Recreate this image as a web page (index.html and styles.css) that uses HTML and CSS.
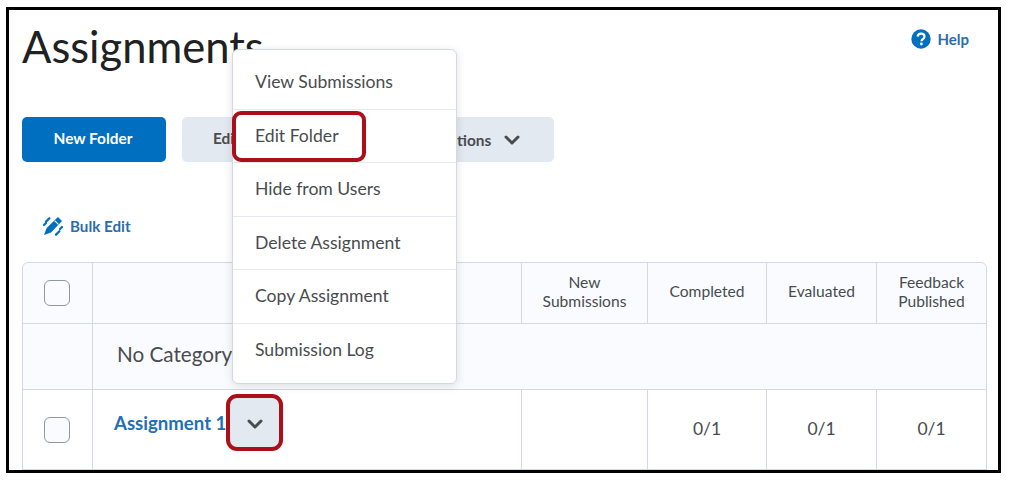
FILE: index.html
```html
<!DOCTYPE html>
<html lang="en">
<head>
    <meta charset="UTF-8">
    <title>Assignments</title>
    <link rel="stylesheet" href="styles.css">
</head>
<body>
    <div class="frame">
        <div class="page-head">
            <h1>Assignments</h1>
            <a class="help-link">
                <svg class="help-icon" viewBox="0 0 20 20"><circle cx="10" cy="10" r="9.7" fill="#006fbf"/><path d="M6.6 7.6C6.8 5.6 8.2 4.6 10.1 4.6c2 0 3.4 1.2 3.4 2.9 0 1.4-.8 2.1-1.8 2.8-.8.5-1.2.9-1.2 1.9" fill="none" stroke="#fff" stroke-width="2.2"/><circle cx="10.4" cy="15" r="1.4" fill="#fff"/></svg>
                Help
            </a>
        </div>
        <div class="actions">
            <button class="btn btn-primary">New Folder</button>
            <button class="btn btn-edit">Edit Categories</button>
            <button class="btn btn-more">More Actions
                <svg class="chevron" viewBox="0 0 16 10"><polyline points="2,2 8,8 14,2"/></svg>
            </button>
        </div>
        <a class="bulk-edit">
            <svg class="bulk-icon" viewBox="0 0 20 20"><path d="M15 1l4 4L8 16.4 1 19l2.6-7z" fill="#006fbf"/><path d="M3 5.6l3.4-3.4M1 9l2-2M13 18.6l3.4-3.4M17 13l2-2" stroke="#006fbf" stroke-width="2.2" stroke-linecap="round"/><path d="M11.6 4.6l3.8 3.8" stroke="#fff" stroke-width="1.2"/></svg>
            Bulk Edit
        </a>
        <table class="grid">
            <colgroup>
                <col class="col-check"><col class="col-name"><col class="col-new"><col class="col-done"><col class="col-eval"><col class="col-feedback">
            </colgroup>
            <thead>
                <tr class="head-row">
                    <th><span class="checkbox"></span></th>
                    <th></th>
                    <th>New<br>Submissions</th>
                    <th>Completed</th>
                    <th>Evaluated</th>
                    <th>Feedback<br>Published</th>
                </tr>
            </thead>
            <tbody>
                <tr class="category-row">
                    <td></td>
                    <td colspan="5" class="category-name">No Category</td>
                </tr>
                <tr class="item-row">
                    <td><span class="checkbox"></span></td>
                    <td class="item-name">
                        <div class="item-title">
                            <a class="item-link">Assignment 1</a>
                            <button class="menu-btn"><svg class="chevron" viewBox="0 0 16 10"><polyline points="2,2 8,8 14,2"/></svg></button>
                        </div>
                    </td>
                    <td></td>
                    <td class="count">0/1</td>
                    <td class="count">0/1</td>
                    <td class="count">0/1</td>
                </tr>
            </tbody>
        </table>
        <ul class="menu">
            <li>View Submissions</li>
            <li class="picked">Edit Folder</li>
            <li>Hide from Users</li>
            <li>Delete Assignment</li>
            <li>Copy Assignment</li>
            <li>Submission Log</li>
        </ul>
    </div>
</body>
</html>
```

FILE: styles.css
```css
html, body {
    margin: 0;
    padding: 0;
    background: #fff;
}
body {
    font-family: Lato, "Open Sans", sans-serif;
    color: #494c4e;
}
.frame {
    position: relative;
    box-sizing: border-box;
    width: 995px;
    height: 466px;
    margin: 7px 0 0 6px;
    padding: 0 13px;
    border: 3px solid #000;
    overflow: hidden;
}
.page-head {
    display: flex;
    justify-content: space-between;
    height: 107px;
}
h1 {
    margin: 8px 0 0;
    font-size: 43.5px;
    font-weight: 400;
    line-height: 56px;
    color: #202122;
}
.help-link {
    display: flex;
    align-items: center;
    gap: 6px;
    height: 20px;
    margin: 19px 16px 0 0;
    font-size: 15px;
    font-weight: 700;
    color: #2b6cab;
}
.help-icon {
    width: 20px;
    height: 20px;
}
.actions {
    display: flex;
    gap: 16px;
}
.btn {
    height: 45px;
    padding: 0 0 4px;
    border: 0;
    border-radius: 5px;
    font-family: inherit;
    font-size: 15.4px;
    font-weight: 700;
    background: #e3e9f1;
    color: #494c4e;
}
.btn-primary {
    width: 144px;
    padding-right: 2px;
    background: #006fbf;
    color: #fff;
}
.btn-edit {
    width: 166px;
}
.btn-more {
    display: flex;
    align-items: center;
    width: 190px;
    padding: 0 0 0 35px;
    gap: 13px;
}
.chevron {
    width: 16px;
    height: 10px;
}
.chevron polyline {
    fill: none;
    stroke: #494c4e;
    stroke-width: 3;
    stroke-linecap: round;
    stroke-linejoin: round;
}
.bulk-edit {
    display: flex;
    align-items: center;
    gap: 7px;
    height: 20px;
    margin: 54px 0 26px 21px;
    font-size: 15.2px;
    font-weight: 700;
    color: #2b6cab;
}
.bulk-icon {
    width: 20px;
    height: 20px;
}
.grid {
    width: 965px;
    table-layout: fixed;
    border-collapse: separate;
    border-spacing: 0;
    border: 1px solid #d3d9e3;
    border-radius: 6px 6px 0 0;
}
.col-check { width: 70px; }
.col-name { width: 429px; }
.col-new { width: 126px; }
.col-done { width: 119px; }
.col-eval { width: 110px; }
.grid th, .grid td {
    padding: 0;
    border-right: 1px solid #d3d9e3;
    border-bottom: 1px solid #d3d9e3;
    text-align: center;
}
.grid th:last-child, .grid td:last-child {
    border-right: 0;
}
.head-row th {
    height: 61px;
    padding-bottom: 3px;
    box-sizing: border-box;
    background: #f9fbff;
    border-radius: 6px 0 0 0;
    font-size: 15.6px;
    font-weight: 400;
    line-height: 19px;
    color: #494c4e;
}
.head-row th:first-child {
    padding: 0 2px 0 0;
}
.head-row th:not(:first-child) {
    border-radius: 0;
}
.head-row th:last-child {
    border-radius: 0 6px 0 0;
}
.category-row td {
    height: 65px;
    background: #f9fbff;
}
.grid .category-name {
    padding: 0 0 5px 24px;
    box-sizing: border-box;
    text-align: left;
    font-size: 20.7px;
    color: #494c4e;
}
.item-row td {
    height: 79px;
}
.item-row td:first-child {
    padding-right: 2px;
    box-sizing: border-box;
}
.grid .item-name {
    padding-left: 21px;
    text-align: left;
}
.item-title {
    display: flex;
    align-items: center;
    margin-bottom: 14px;
}
.item-link {
    font-size: 18.6px;
    font-weight: 700;
    color: #1f6fb5;
    white-space: nowrap;
}
.grid .count {
    padding-bottom: 3px;
    box-sizing: border-box;
    font-size: 17.5px;
}
.checkbox {
    display: inline-block;
    box-sizing: border-box;
    width: 26px;
    height: 26px;
    border: 1.5px solid #90989d;
    border-radius: 6px;
    background: #f9fbff;
    vertical-align: middle;
}
.menu-btn {
    flex: none;
    box-sizing: border-box;
    width: 57px;
    height: 57px;
    padding: 3px 0 0;
    border: 4px solid #ab0f17;
    border-radius: 11px;
    background: #e3e9f1;
}
.menu {
    position: absolute;
    left: 223px;
    top: 39px;
    box-sizing: border-box;
    width: 225px;
    margin: 0;
    padding: 6px 0 5px;
    list-style: none;
    background: #fff;
    border: 1px solid #d3d9e3;
    border-radius: 6px;
    box-shadow: 0 2px 10px rgba(0, 0, 0, 0.12);
    font-size: 17.6px;
}
.menu li {
    position: relative;
    box-sizing: border-box;
    height: 53.6px;
    padding-left: 22px;
    line-height: 52px;
    border-bottom: 1px solid #e6eaf0;
}
.menu li:last-child {
    border-bottom: 0;
}
.menu .picked::after {
    content: "";
    position: absolute;
    left: -1px;
    top: 1px;
    width: 134px;
    height: 51px;
    box-sizing: border-box;
    border: 4px solid #ab0f17;
    border-radius: 9px;
}
```
